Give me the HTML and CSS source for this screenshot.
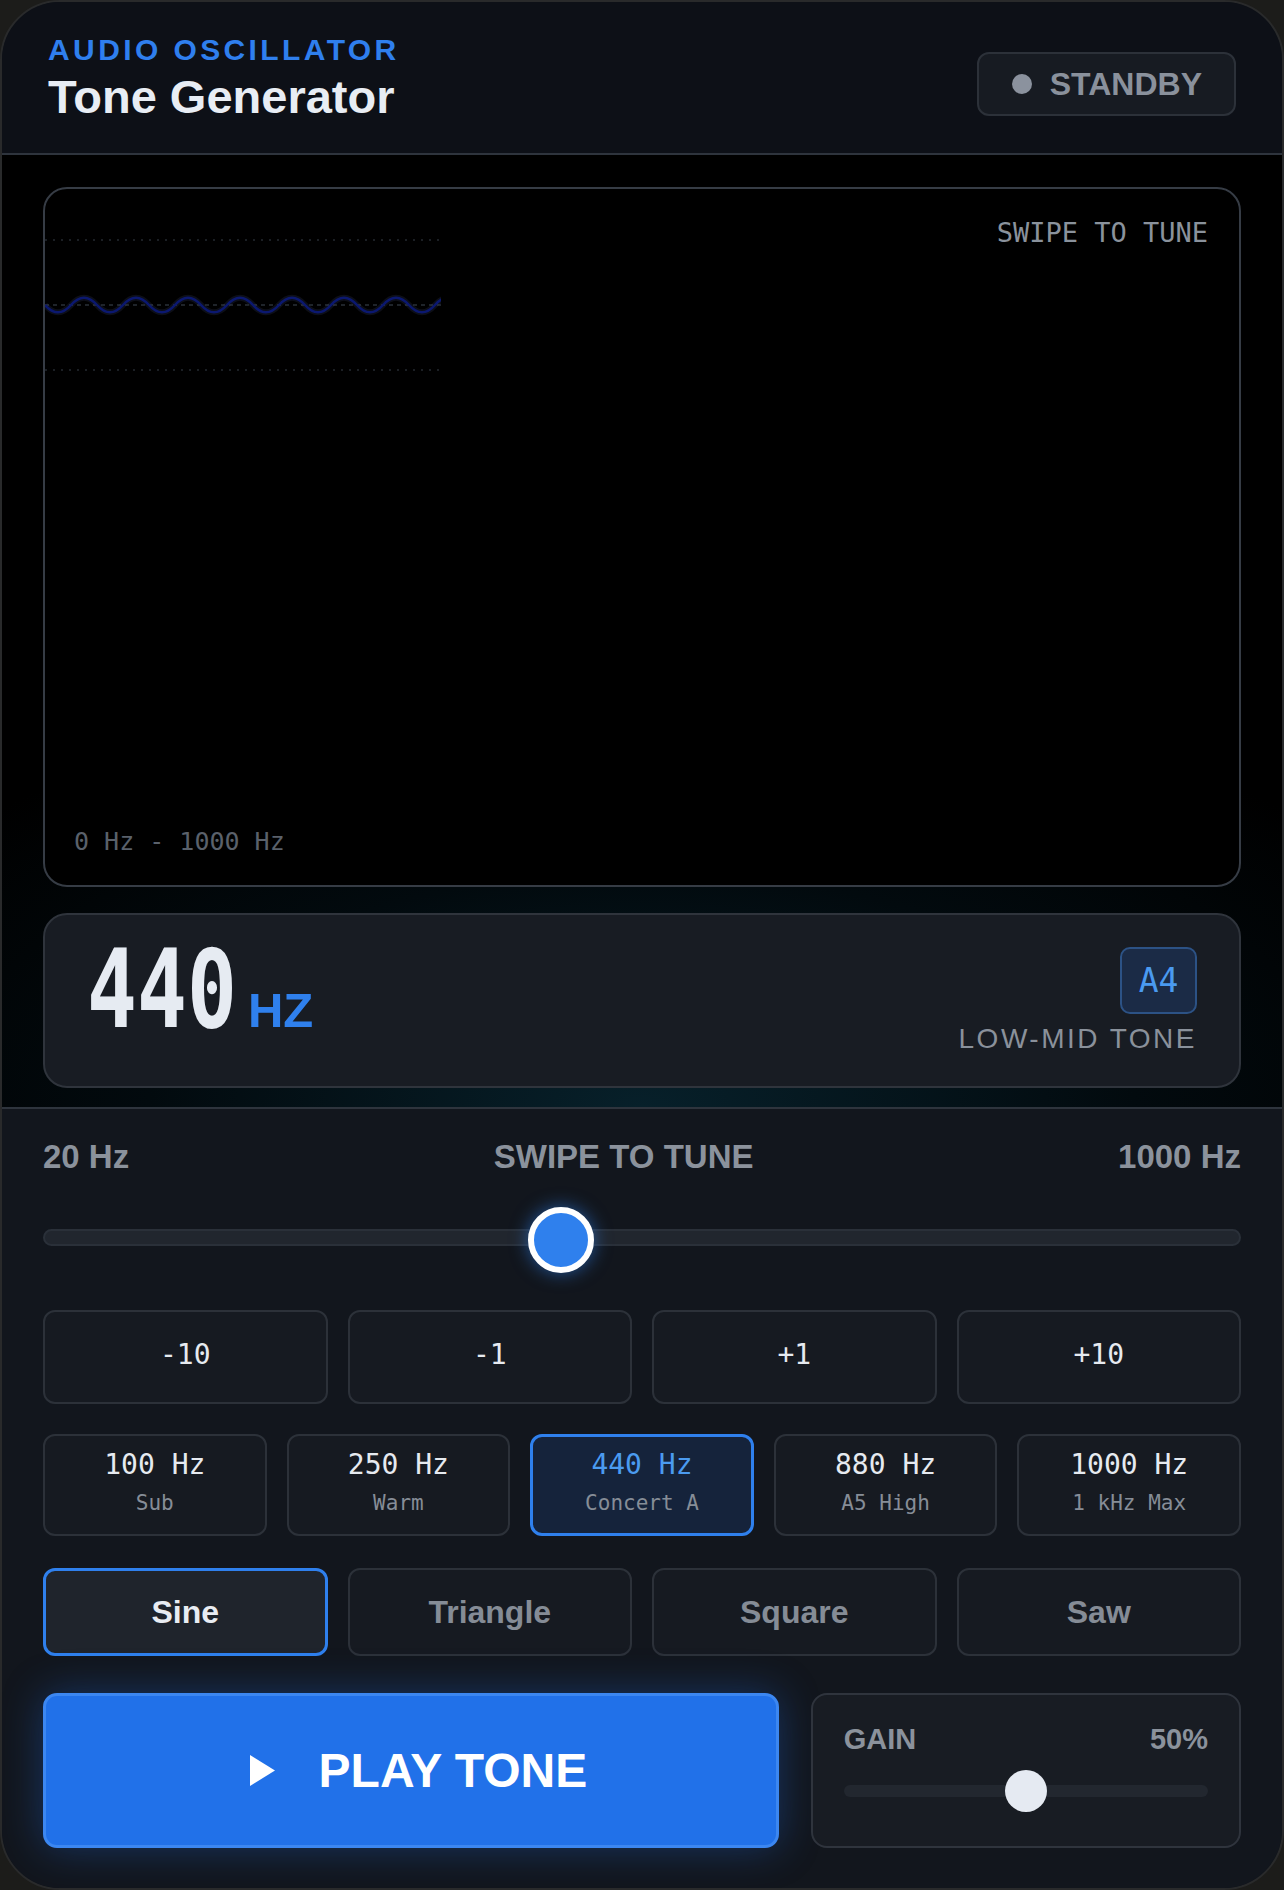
FILE: index.html
```html
<!DOCTYPE html>
<html lang="en">
<head>
  <meta charset="utf-8">
  <title>Tone Generator</title>
  <link rel="stylesheet" href="styles.css">
</head>
<body>
  <div class="device">

    <header class="topbar">
      <div class="titles">
        <div class="eyebrow">Audio Oscillator</div>
        <h1 class="app-title">Tone Generator</h1>
      </div>
      <div class="status">
        <span class="status-dot"></span>
        <span class="status-text">STANDBY</span>
      </div>
    </header>

    <section class="stage">
      <div class="scope">
        <svg class="scope-trace" width="396" height="232" viewBox="0 0 396 232">
          <line class="grid-dot" x1="0" y1="51" x2="396" y2="51"/>
          <line class="grid-mid" x1="0" y1="116" x2="396" y2="116"/>
          <line class="grid-dot" x1="0" y1="181" x2="396" y2="181"/>
          <path class="wave-halo" d="M0 116 Q13 130.6 26 116 T52 116 T78 116 T104 116 T130 116 T156 116 T182 116 T208 116 T234 116 T260 116 T286 116 T312 116 T338 116 T364 116 T390 116 T416 116"/>
          <path class="wave" d="M0 116 Q13 130.6 26 116 T52 116 T78 116 T104 116 T130 116 T156 116 T182 116 T208 116 T234 116 T260 116 T286 116 T312 116 T338 116 T364 116 T390 116 T416 116"/>
        </svg>
        <span class="scope-hint">SWIPE TO TUNE</span>
        <span class="scope-range">0 Hz - 1000 Hz</span>
      </div>

      <div class="readout">
        <div class="freq">
          <span class="freq-value">440</span>
          <span class="freq-unit">Hz</span>
        </div>
        <div class="note">
          <span class="note-badge">A4</span>
          <span class="note-desc">LOW-MID TONE</span>
        </div>
      </div>
    </section>

    <section class="controls">
      <div class="range-labels">
        <span>20 Hz</span>
        <span>SWIPE TO TUNE</span>
        <span>1000 Hz</span>
      </div>

      <div class="slider freq-slider">
        <div class="slider-track"></div>
        <div class="slider-thumb" style="left: calc((100% - 66px) * 0.4286)"></div>
      </div>

      <div class="steps">
        <button class="step">-10</button>
        <button class="step">-1</button>
        <button class="step">+1</button>
        <button class="step">+10</button>
      </div>

      <div class="presets">
        <button class="preset"><span class="preset-hz">100 Hz</span><span class="preset-name">Sub</span></button>
        <button class="preset"><span class="preset-hz">250 Hz</span><span class="preset-name">Warm</span></button>
        <button class="preset active"><span class="preset-hz">440 Hz</span><span class="preset-name">Concert A</span></button>
        <button class="preset"><span class="preset-hz">880 Hz</span><span class="preset-name">A5 High</span></button>
        <button class="preset"><span class="preset-hz">1000 Hz</span><span class="preset-name">1 kHz Max</span></button>
      </div>

      <div class="waves">
        <button class="wave-btn active">Sine</button>
        <button class="wave-btn">Triangle</button>
        <button class="wave-btn">Square</button>
        <button class="wave-btn">Saw</button>
      </div>

      <div class="transport">
        <button class="play">
          <svg class="play-icon" width="25" height="31" viewBox="0 0 25 31"><path d="M0 0 L25 15.5 L0 31 Z"/></svg>
          <span>PLAY TONE</span>
        </button>
        <div class="gain">
          <div class="gain-head">
            <span>GAIN</span>
            <span>50%</span>
          </div>
          <div class="slider gain-slider">
            <div class="slider-track"></div>
            <div class="slider-thumb" style="left: calc((100% - 42px) * 0.5)"></div>
          </div>
        </div>
      </div>
    </section>

  </div>
</body>
</html>
```
FILE: styles.css
```css
html {
  height: 100%;
}
body {
  margin: 0;
  height: 100%;
  background: #1c1c1a;
  font-family: "Liberation Sans", Arial, sans-serif;
  color: #e8edf4;
}
button {
  font: inherit;
  color: inherit;
  cursor: pointer;
}

.device {
  box-sizing: border-box;
  height: 100%;
  border: 2px solid #292a2b;
  border-radius: 60px;
  overflow: hidden;
  display: flex;
  flex-direction: column;
  background: #12161d;
}

/* header */
.topbar {
  box-sizing: border-box;
  height: 153px;
  padding: 30px 46px 0;
  display: flex;
  justify-content: space-between;
  align-items: flex-start;
  background: #0d1017;
  border-bottom: 2px solid #2e343d;
}
.eyebrow {
  font-size: 30px;
  line-height: 36px;
  font-weight: 700;
  letter-spacing: 3.4px;
  text-transform: uppercase;
  color: #2f7fee;
}
.app-title {
  margin: 1px 0 0;
  font-size: 47px;
  line-height: 56px;
  font-weight: 700;
  color: #e8edf4;
}
.status {
  box-sizing: border-box;
  height: 64px;
  margin-top: 20px;
  padding: 0 32px 0 33px;
  display: flex;
  align-items: center;
  gap: 18px;
  background: #171b22;
  border: 2px solid #2c3139;
  border-radius: 12px;
}
.status-dot {
  width: 20px;
  height: 20px;
  border-radius: 50%;
  background: #8b929e;
}
.status-text {
  font-size: 32px;
  font-weight: 700;
  color: #8a919c;
}

/* scope + readout */
.stage {
  padding: 32px 41px 19px;
  display: flex;
  flex-direction: column;
  gap: 26px;
  background: radial-gradient(70% 45% at 50% 100%, #07202a 0%, #020a0e 55%, #000 100%);
  border-bottom: 2px solid #2e343d;
}
.scope {
  position: relative;
  box-sizing: border-box;
  height: 700px;
  background: #000;
  border: 2px solid #363c45;
  border-radius: 24px;
  overflow: hidden;
}
.scope-trace {
  position: absolute;
  left: 0;
  top: 0;
}
.grid-dot {
  stroke: #242a31;
  stroke-width: 1.5;
  stroke-dasharray: 2 6;
}
.grid-mid {
  stroke: #2a3038;
  stroke-width: 1.5;
  stroke-dasharray: 4 4;
}
.wave-halo {
  fill: none;
  stroke: rgba(60, 70, 110, 0.22);
  stroke-width: 6;
}
.wave {
  fill: none;
  stroke: #0b186f;
  stroke-width: 2.6;
}
.scope-hint {
  position: absolute;
  top: 28px;
  right: 31px;
  font-family: "DejaVu Sans Mono", monospace;
  font-size: 27px;
  color: #8a929c;
}
.scope-range {
  position: absolute;
  left: 29px;
  bottom: 29px;
  font-family: "DejaVu Sans Mono", monospace;
  font-size: 25px;
  color: #5a616b;
}

.readout {
  box-sizing: border-box;
  height: 175px;
  padding: 0 42px;
  display: flex;
  align-items: center;
  justify-content: space-between;
  background: #181c23;
  border: 2px solid #2f343c;
  border-radius: 24px;
}
.freq {
  display: flex;
  align-items: baseline;
  gap: 11px;
  margin-top: -4px;
}
/* tall, tight digits for the big readout */
.freq-value {
  display: inline-block;
  font-family: "DejaVu Sans Mono", monospace;
  font-size: 83px;
  line-height: 1;
  font-weight: 700;
  color: #e6ebf2;
  transform: scaleY(1.3);
  transform-origin: 50% 84%;
}
.freq-unit {
  font-size: 49px;
  font-weight: 700;
  text-transform: uppercase;
  color: #2f80ed;
}
.note {
  display: flex;
  flex-direction: column;
  align-items: flex-end;
  gap: 9px;
}
.note-badge {
  box-sizing: border-box;
  width: 77px;
  height: 67px;
  display: flex;
  align-items: center;
  justify-content: center;
  font-family: "DejaVu Sans Mono", monospace;
  font-size: 33px;
  color: #4a9af0;
  background: #1b2b46;
  border: 2px solid #2c5285;
  border-radius: 10px;
}
.note-desc {
  font-size: 28px;
  letter-spacing: 2.5px;
  color: #8a919b;
}

/* controls */
.controls {
  flex: 1;
  padding: 29px 41px 0;
  display: flex;
  flex-direction: column;
  background: #12161d;
}
.range-labels {
  display: flex;
  justify-content: space-between;
  font-size: 33px;
  font-weight: 700;
  color: #8b929c;
}

.slider {
  position: relative;
  display: flex;
  align-items: center;
}
.slider-track {
  flex: 1;
  border-radius: 9px;
}
.slider-thumb {
  position: absolute;
  top: 0;
  box-sizing: border-box;
  border-radius: 50%;
}
.freq-slider {
  height: 66px;
  margin-top: 31px;
}
.freq-slider .slider-track {
  box-sizing: border-box;
  height: 17px;
  margin-top: -6px;
  background: #21262e;
  border: 2px solid #2a3039;
}
.freq-slider .slider-thumb {
  width: 66px;
  height: 66px;
  background: #2f80ed;
  border: 6px solid #fff;
  box-shadow: 0 0 18px rgba(47, 128, 237, 0.6);
}

.steps,
.waves {
  display: grid;
  grid-template-columns: repeat(4, 1fr);
  gap: 20px;
}
.steps {
  margin-top: 37px;
}
.step {
  box-sizing: border-box;
  height: 94px;
  padding: 0 0 6px;
  background: #161a21;
  border: 2px solid #2c3139;
  border-radius: 12px;
  font-family: "DejaVu Sans Mono", monospace;
  font-size: 28px;
  color: #e6eaf0;
}

.presets {
  margin-top: 30px;
  display: grid;
  grid-template-columns: repeat(5, 1fr);
  gap: 20px;
}
.preset {
  box-sizing: border-box;
  height: 102px;
  padding: 0 0 8px;
  display: flex;
  flex-direction: column;
  align-items: center;
  justify-content: center;
  gap: 10px;
  background: #161a21;
  border: 2px solid #2c3139;
  border-radius: 12px;
  font-family: "DejaVu Sans Mono", monospace;
}
.preset-hz {
  font-size: 28px;
  color: #e6eaf0;
}
.preset-name {
  font-size: 21px;
  color: #868d97;
}
.preset.active {
  background: #15233b;
  border: 3px solid #2f80ed;
}
.preset.active .preset-hz {
  color: #4b9bf0;
}

.waves {
  margin-top: 32px;
}
.wave-btn {
  height: 88px;
  background: #161a21;
  border: 2px solid #2c3139;
  border-radius: 12px;
  font-size: 32px;
  font-weight: 700;
  color: #858c96;
}
.wave-btn.active {
  background: #1f242c;
  border: 3px solid #2f80ed;
  color: #e8ecf2;
}

.transport {
  margin-top: 37px;
  height: 155px;
  display: grid;
  grid-template-columns: 1.71fr 1fr;
  gap: 32px;
}
.play {
  padding: 0 0 0 15px;
  display: flex;
  align-items: center;
  justify-content: center;
  gap: 44px;
  background: #2171e9;
  border: 3px solid #3c87f1;
  border-radius: 14px;
  box-shadow: 0 0 40px rgba(33, 113, 233, 0.35);
  font-size: 48px;
  font-weight: 700;
  color: #fff;
}
.play-icon {
  fill: #fff;
}
.gain {
  box-sizing: border-box;
  padding: 28px 31px 0;
  background: #181c23;
  border: 2px solid #2f343d;
  border-radius: 16px;
}
.gain-head {
  display: flex;
  justify-content: space-between;
  font-size: 29px;
  font-weight: 700;
  color: #8b929c;
}
.gain-slider {
  height: 42px;
  margin-top: 14px;
}
.gain-slider .slider-track {
  height: 12px;
  background: #22272f;
}
.gain-slider .slider-thumb {
  width: 42px;
  height: 42px;
  background: #e5eaf2;
}
```
